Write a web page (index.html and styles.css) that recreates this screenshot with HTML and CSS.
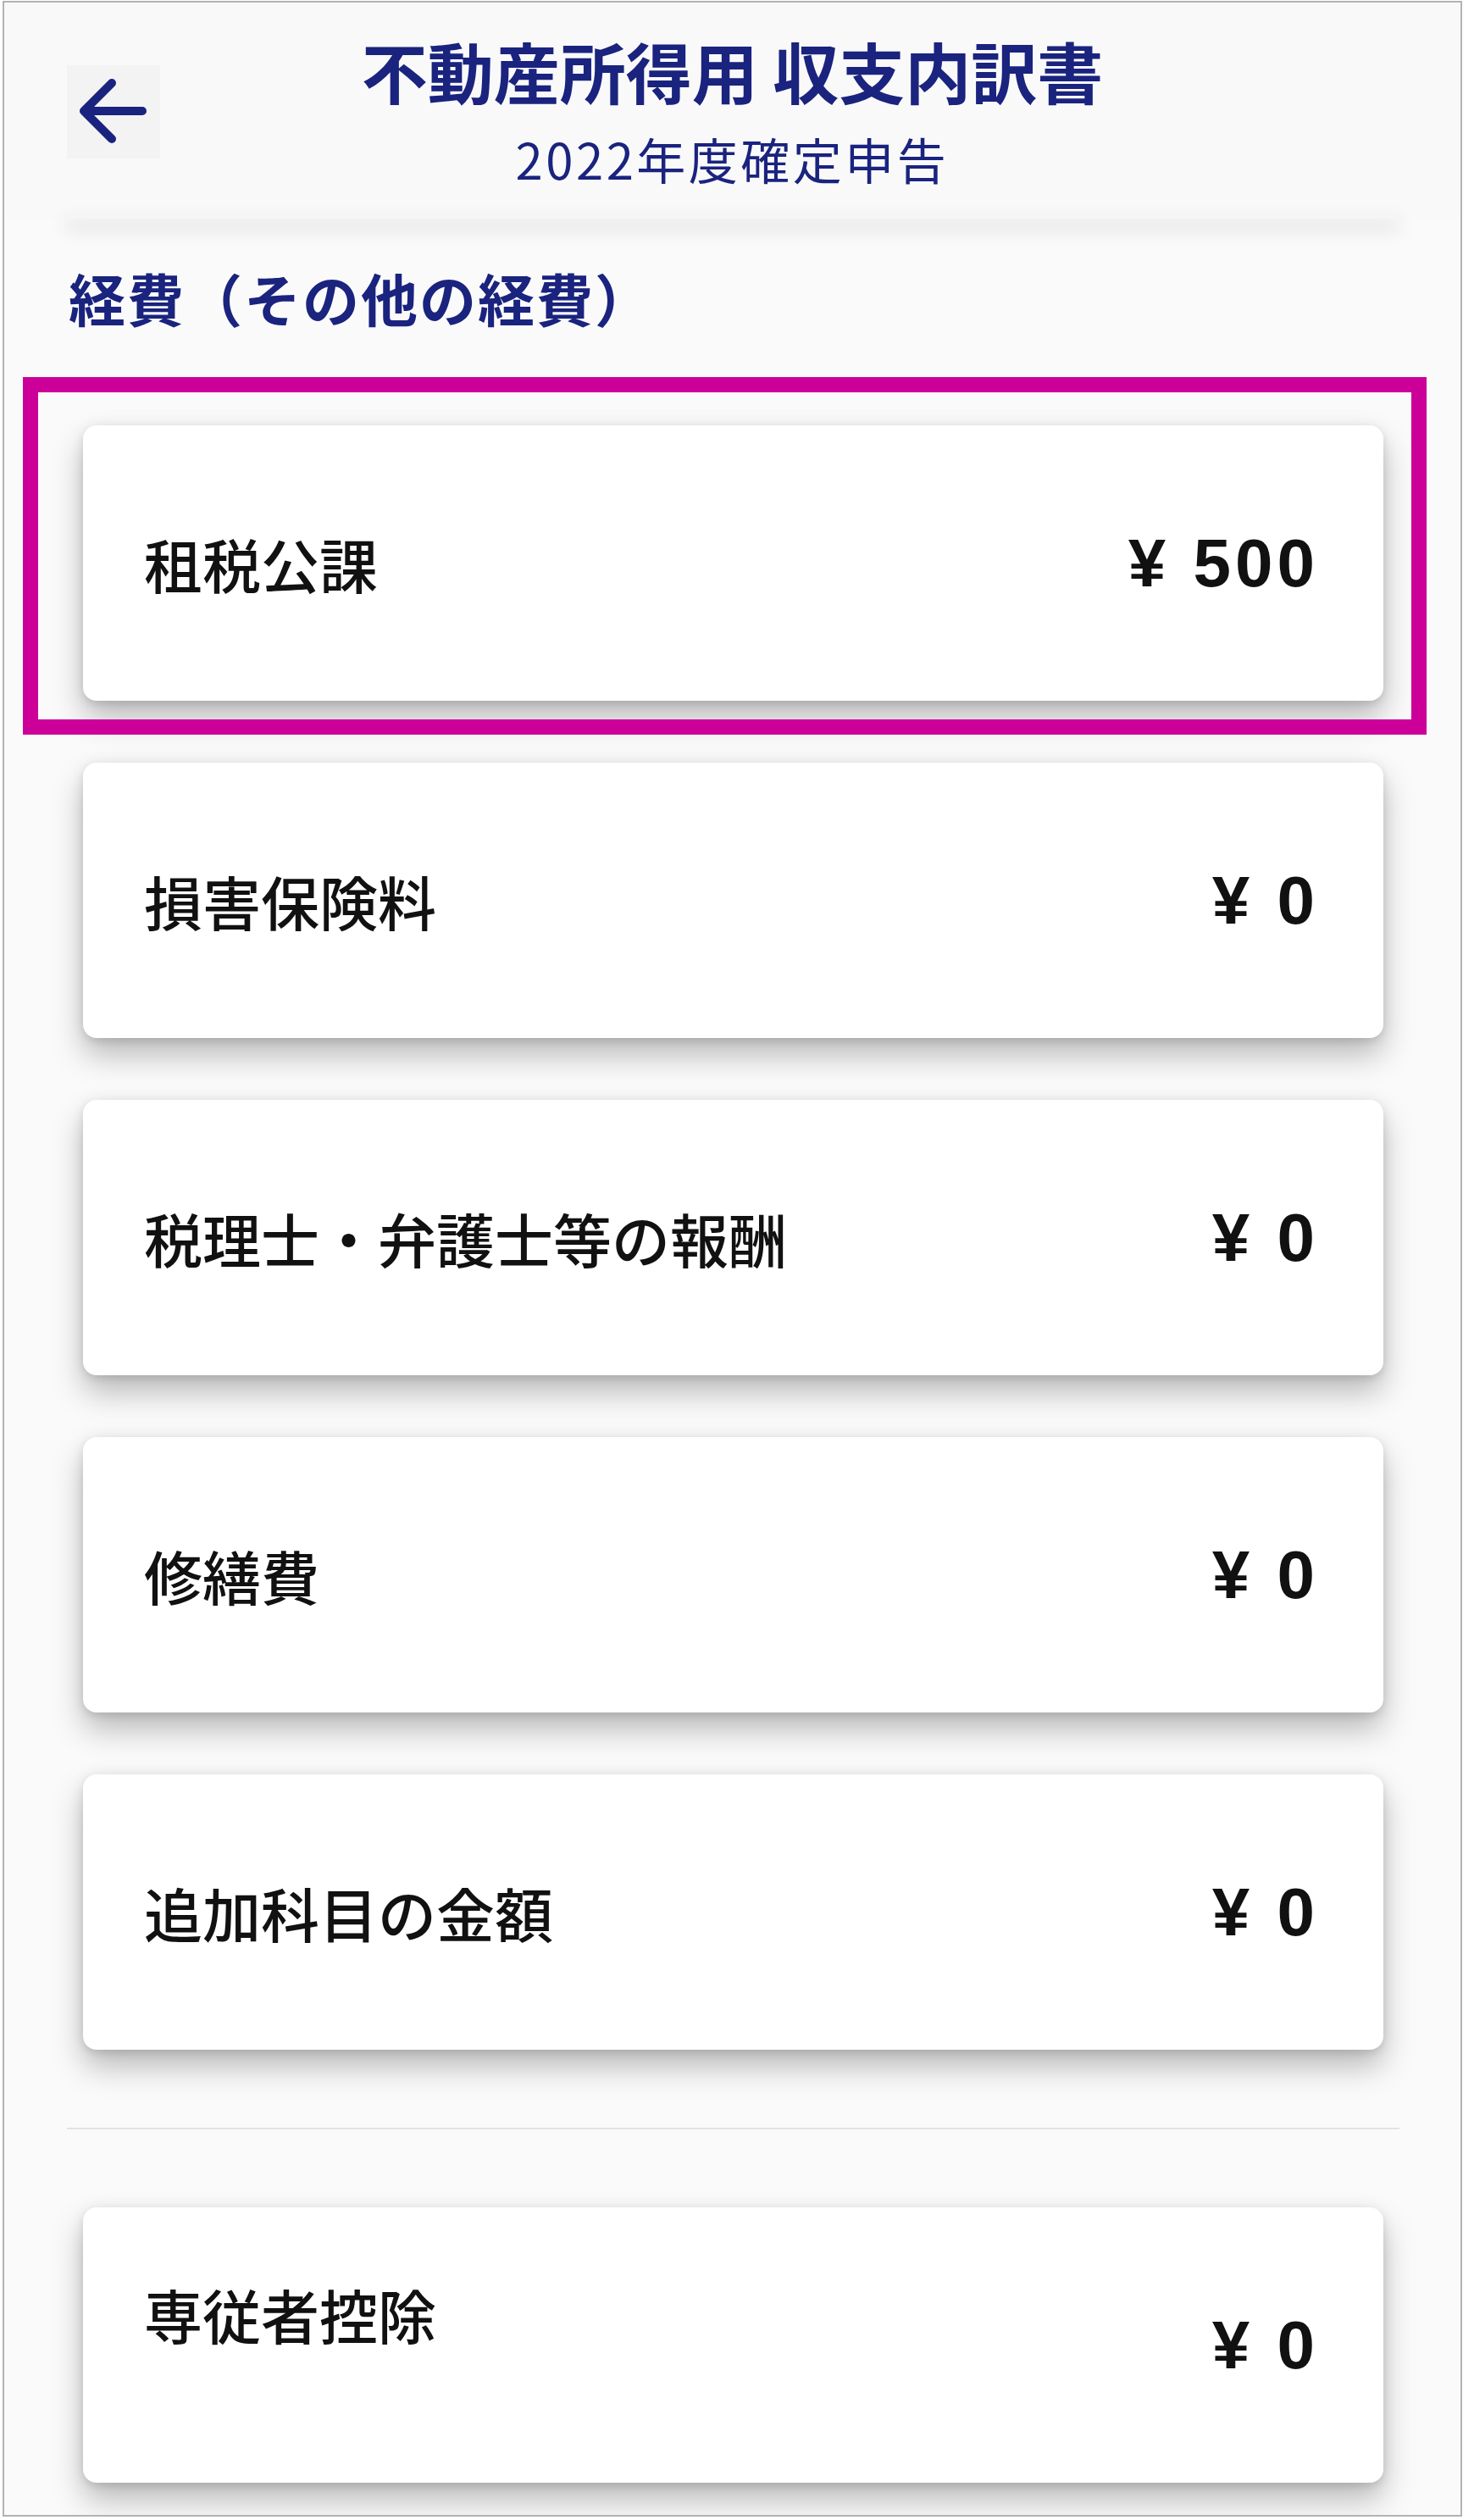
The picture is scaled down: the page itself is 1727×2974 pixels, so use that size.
FILE: index.html
```html
<!DOCTYPE html>
<html lang="ja">
<head>
<meta charset="utf-8">
<title>不動産所得用 収支内訳書</title>
<link rel="stylesheet" href="styles.css">
</head>
<body>
<div class="frame">
  <header class="app-header">
    <button class="back-btn" aria-label="戻る">
      <svg viewBox="0 0 110 110" width="110" height="110" aria-hidden="true">
        <path d="M20 54 H89 M53 21 L20 54 L53 87" fill="none" stroke="#1a237e" stroke-width="10" stroke-linecap="round" stroke-linejoin="round"/>
      </svg>
    </button>
    <div class="header-titles">
      <h1 class="title">不動産所得用 収支内訳書</h1>
      <div class="subtitle">2022年度確定申告</div>
    </div>
    <div class="header-spacer"></div>
  </header>

  <h2 class="section-title">経費（その他の経費）</h2>

  <div class="card-list">
    <div class="card card--highlighted">
      <div class="highlight"></div>
      <span class="card-label">租税公課</span>
      <span class="card-amount">¥ 500</span>
    </div>
    <div class="card">
      <span class="card-label">損害保険料</span>
      <span class="card-amount">¥ 0</span>
    </div>
    <div class="card">
      <span class="card-label">税理士・弁護士等の報酬</span>
      <span class="card-amount">¥ 0</span>
    </div>
    <div class="card">
      <span class="card-label">修繕費</span>
      <span class="card-amount">¥ 0</span>
    </div>
    <div class="card">
      <span class="card-label">追加科目の金額</span>
      <span class="card-amount">¥ 0</span>
    </div>
  </div>

  <hr class="divider">

  <div class="card-list">
    <div class="card">
      <span class="card-label card-label--raised">専従者控除</span>
      <span class="card-amount">¥ 0</span>
    </div>
  </div>
</div>
</body>
</html>
```

FILE: styles.css
```css
html, body {
  margin: 0;
  padding: 0;
  background: #ffffff;
}

.frame {
  box-sizing: border-box;
  width: 1723px;
  height: 2969px;
  margin: 1px 0 0 3px;
  border: 2px solid #b3b3b3;
  background: #fafafa;
  overflow: hidden;
  font-family: "Noto Sans CJK JP", "Noto Sans", sans-serif;
}

/* Header */
.app-header {
  position: relative;
  z-index: 1;
  display: grid;
  grid-template-columns: 1fr auto 1fr;
  align-items: start;
  height: 255px;
  box-sizing: border-box;
  padding: 38px 0 0 74px;
  background: #f9f9f9;
}

.app-header::after {
  content: "";
  position: absolute;
  left: 70px;
  right: 70px;
  bottom: 0;
  height: 8px;
  background: #f5f5f5;
  box-shadow: 0 12px 22px -2px rgba(0, 0, 0, 0.3);
  z-index: -1;
}

.back-btn {
  justify-self: start;
  width: 110px;
  height: 110px;
  margin-top: 36px;
  padding: 0;
  border: none;
  background: #f3f3f3;
  display: flex;
  align-items: center;
  justify-content: center;
}

.back-btn svg {
  display: block;
}

.header-titles {
  display: flex;
  flex-direction: column;
  align-items: center;
  margin-left: -74px;
}

.title {
  margin: 0;
  font-size: 78px;
  line-height: 84px;
  font-weight: 700;
  color: #1a237e;
  white-space: nowrap;
}

.subtitle {
  margin-top: 27px;
  font-size: 58px;
  line-height: 70px;
  font-weight: 400;
  color: #1a237e;
  letter-spacing: 3.5px;
  white-space: nowrap;
}

/* Section heading */
.section-title {
  margin: 53px 0 0 0;
  padding-left: 76px;
  font-size: 67px;
  line-height: 80px;
  font-weight: 700;
  color: #1a237e;
  letter-spacing: 2px;
}

/* Cards */
.card-list {
  display: flex;
  flex-direction: column;
  gap: 73px;
  padding: 0 91px 0 93px;
}

.section-title + .card-list {
  margin-top: 111px;
}

.card {
  position: relative;
  display: flex;
  align-items: center;
  justify-content: space-between;
  height: 325px;
  box-sizing: border-box;
  padding: 0 76px 0 72px;
  background: #ffffff;
  border-radius: 16px;
  box-shadow: 0 20px 36px rgba(0, 0, 0, 0.26), 0 4px 10px rgba(0, 0, 0, 0.08), 0 0 18px rgba(0, 0, 0, 0.06);
}

.card-label {
  font-size: 69px;
  line-height: 80px;
  font-weight: 500;
  color: #111111;
  white-space: nowrap;
}

.card-label--raised {
  padding-bottom: 74px;
}

.card-amount {
  font-family: "Liberation Sans", Arial, sans-serif;
  font-size: 80px;
  line-height: 80px;
  font-weight: 700;
  letter-spacing: 5px;
  color: #111111;
  white-space: nowrap;
}

.highlight {
  position: absolute;
  left: -71px;
  top: -57px;
  width: 1657px;
  height: 422px;
  box-sizing: border-box;
  border: 18px solid #cc0099;
  pointer-events: none;
}

/* Divider */
.divider {
  margin: 92px 72px 92px 74px;
  border: none;
  height: 2px;
  background: #e3e3e3;
}
```
